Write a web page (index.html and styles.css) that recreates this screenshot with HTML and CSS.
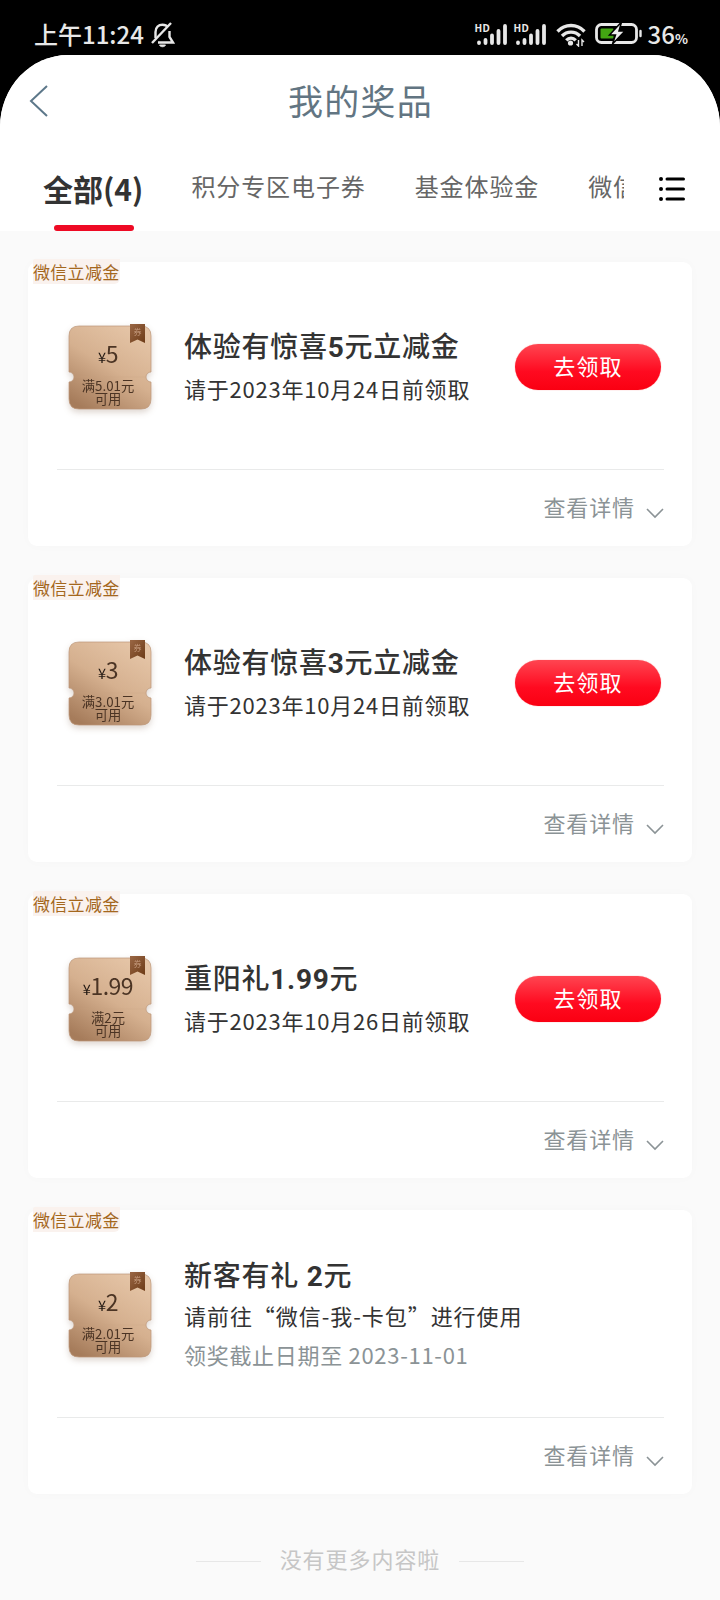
FILE: index.html
```html
<!DOCTYPE html>
<html lang="zh-CN">
<head>
<meta charset="utf-8">
<title>我的奖品</title>
<link rel="stylesheet" href="styles.css">
</head>
<body>
<svg class="defs" width="0" height="0">
  <defs>
    <linearGradient id="gold" x1=".8" y1="0" x2=".2" y2="1">
      <stop offset="0" stop-color="#e6c6a8"/><stop offset=".5" stop-color="#d5b08f"/><stop offset="1" stop-color="#a67c5b"/>
    </linearGradient>
    <linearGradient id="ribbon" x1="0" y1="0" x2="1" y2="1">
      <stop offset="0" stop-color="#9a6745"/><stop offset="1" stop-color="#6d3b17"/>
    </linearGradient>
    <symbol id="coupon" viewBox="0 0 84 86">
      <path d="M11 2H73Q83 2 83 12V48A5 5 0 0 0 83 58V75Q83 85 73 85H11Q1 85 1 75V58A5 5 0 0 0 1 48V12Q1 2 11 2Z" fill="url(#gold)" stroke="#bd9778" stroke-width=".7"/>
      <path d="M7 53H77" stroke="#c8a27f" stroke-width=".6" opacity=".4"/>
      <path d="M62 0H77V19L69.500 15.500L62 19Z" fill="url(#ribbon)"/>
    </symbol>
    <symbol id="down" viewBox="0 0 18 12"><path d="M1 2L9 10L17 2" fill="none" stroke="#8b9396" stroke-width="1.600"/></symbol>
  </defs>
</svg>
<header class="status">
  <span class="time">上午11:24</span>
  <svg class="bell" width="24" height="26" viewBox="0 0 24 26" fill="none" stroke="#e8e8e8" stroke-width="2.400">
    <path d="M4.500 16V10C4.500 5 7.500 2.800 11.500 2.800C14 2.800 16 3.800 17 5.200M18.500 9V15L22 20.500H7"/><path d="M1 21L20 1"/><path d="M8.500 23C9.500 25.300 13.500 25.300 14.500 23Z" fill="#e8e8e8" stroke-width="1"/>
  </svg>
  <div class="indicators">
    <div class="sim"><span>HD</span><svg width="33" height="24" viewBox="0 0 33 24" stroke="#e8e8e8" stroke-width="3.800" stroke-linecap="round"><path d="M4 20V19.500M10.500 20V17M17 20V12.500M23.500 20V8M30 20V3"/></svg></div>
    <div class="sim"><span>HD</span><svg width="33" height="24" viewBox="0 0 33 24" stroke="#e8e8e8" stroke-width="3.800" stroke-linecap="round"><path d="M4 20V19.500M10.500 20V17M17 20V12.500M23.500 20V8M30 20V3"/></svg></div>
    <svg class="wifi" width="30" height="24" viewBox="0 0 30 24" fill="none" stroke="#e8e8e8" stroke-width="3.300">
      <path d="M1.500 8.500C9 .5 21 .5 28.500 8.500M6 13C11 7.800 19 7.800 24 13M10.300 17.300C13 14.300 17 14.300 19.700 17.300"/><circle cx="14.500" cy="20" r="2.600" fill="#e8e8e8" stroke="none"/><path d="M22.500 17V23L20.500 21M26 23V17L28 19" stroke-width="1.400"/>
    </svg>
    <svg class="battery" width="47" height="24" viewBox="0 0 47 24">
      <rect x="1.500" y="2.500" width="40" height="18" rx="5" fill="none" stroke="#e8e8e8" stroke-width="2.800"/>
      <rect x="5.500" y="6.500" width="13" height="10" rx="1" fill="#43a512"/>
      <path d="M26.500 0L14.500 13H20.500L17.500 22L30 9H24Z" fill="#eee" stroke="#000" stroke-width="1.500"/>
      <path d="M45.500 9V14" stroke="#e8e8e8" stroke-width="2.400" stroke-linecap="round"/>
    </svg>
    <span class="percent">36<small>%</small></span>
  </div>
</header>
<main class="app">
  <div class="top">
    <div class="nav">
      <svg class="back" width="20" height="34" viewBox="0 0 20 34"><path d="M18 2L2 17L18 32" fill="none" stroke="#5d788a" stroke-width="2"/></svg>
      <h1>我的奖品</h1>
    </div>
    <div class="tabbar">
      <div class="tabs"><span class="tab active">全部(4)</span><span class="tab">积分专区电子券</span><span class="tab">基金体验金</span><span class="tab">微信立减金</span></div>
      <svg class="menu" width="28" height="26" viewBox="0 0 28 26" stroke="#000" stroke-width="3" stroke-linecap="round"><path d="M9 3H25.500M9 13H25.500M9 23H25.500"/><path d="M3 3H3.010M3 13H3.010M3 23H3.010" stroke-width="4"/></svg>
    </div>
  </div>
  <div class="list">
    <article class="card">
      <span class="tag">微信立减金</span>
      <div class="body">
        <div class="coupon"><svg width="84" height="86"><use href="#coupon"/></svg><span class="mark">券</span><div class="face"><p class="amount"><small>¥</small>5</p><p class="rule">满5.01元<br>可用</p></div></div>
        <div class="info"><h2>体验有惊喜<b>5</b>元立减金</h2><p>请于2023年10月24日前领取</p></div>
        <button class="claim">去领取</button>
      </div>
      <div class="detail"><span>查看详情</span><svg width="18" height="12"><use href="#down"/></svg></div>
    </article>
    <article class="card">
      <span class="tag">微信立减金</span>
      <div class="body">
        <div class="coupon"><svg width="84" height="86"><use href="#coupon"/></svg><span class="mark">券</span><div class="face"><p class="amount"><small>¥</small>3</p><p class="rule">满3.01元<br>可用</p></div></div>
        <div class="info"><h2>体验有惊喜<b>3</b>元立减金</h2><p>请于2023年10月24日前领取</p></div>
        <button class="claim">去领取</button>
      </div>
      <div class="detail"><span>查看详情</span><svg width="18" height="12"><use href="#down"/></svg></div>
    </article>
    <article class="card">
      <span class="tag">微信立减金</span>
      <div class="body">
        <div class="coupon"><svg width="84" height="86"><use href="#coupon"/></svg><span class="mark">券</span><div class="face"><p class="amount"><small>¥</small>1.99</p><p class="rule">满2元<br>可用</p></div></div>
        <div class="info"><h2>重阳礼<b>1.99</b>元</h2><p>请于2023年10月26日前领取</p></div>
        <button class="claim">去领取</button>
      </div>
      <div class="detail"><span>查看详情</span><svg width="18" height="12"><use href="#down"/></svg></div>
    </article>
    <article class="card">
      <span class="tag">微信立减金</span>
      <div class="body">
        <div class="coupon"><svg width="84" height="86"><use href="#coupon"/></svg><span class="mark">券</span><div class="face"><p class="amount"><small>¥</small>2</p><p class="rule">满2.01元<br>可用</p></div></div>
        <div class="info three"><h2>新客有礼 <b>2</b>元</h2><p class="how">请前往“微信-我-卡包”进行使用</p><p class="until">领奖截止日期至 2023-11-01</p></div>
      </div>
      <div class="detail"><span>查看详情</span><svg width="18" height="12"><use href="#down"/></svg></div>
    </article>
  </div>
  <footer class="end">没有更多内容啦</footer>
</main>
</body>
</html>
```
FILE: styles.css
```css
* { box-sizing: border-box; }
body { margin: 0; width: 720px; height: 1600px; overflow: hidden; background: #000; font-family: "Noto Sans CJK SC", sans-serif; color: #333; }
h1, h2, p { margin: 0; }
svg { display: block; flex: none; }
.defs { position: absolute; }

.status { height: 55px; padding: 14px 32px 0 34px; display: flex; align-items: flex-start; color: #e8e8e8; }
.time { font-size: 24px; line-height: 40px; font-weight: 500; white-space: nowrap; }
.bell { margin: 8px 0 0 7px; }
.indicators { display: flex; margin-left: auto; }
.sim { position: relative; width: 33px; margin: 9px 6px 0 0; }
.sim span { position: absolute; left: 0; top: 0; font: 700 10px/11px "Noto Sans", sans-serif; letter-spacing: .3px; }
.wifi { margin: 9px 9px 0 3px; }
.battery { margin: 8px 6px 0 0; }
.percent { font-size: 24px; line-height: 40px; font-weight: 500; white-space: nowrap; }
.percent small { font-size: 13.500px; font-weight: 700; }

.app { height: 1545px; background: #fafafa; border-radius: 68px 68px 0 0 / 72px 72px 0 0; overflow: hidden; }
.top { height: 176px; background: #fff; }
.nav { height: 92px; display: flex; align-items: center; padding-left: 29px; }
.back { width: 20px; }
.nav h1 { flex: 1; margin: -3px 48px 0 0; text-align: center; font-size: 35px; line-height: 50px; font-weight: 400; letter-spacing: 1.200px; color: #627582; }
.tabbar { height: 84px; display: flex; }
.tabs { width: 624px; overflow: hidden; display: flex; padding-left: 43px; white-space: nowrap; }
.tab { flex: none; font-size: 24px; line-height: 36px; padding-top: 21px; margin-right: 49px; letter-spacing: .9px; color: #666; }
.tab.active { position: relative; font-size: 30px; line-height: 44px; padding-top: 19px; margin-right: 48px; font-weight: 700; color: #333; letter-spacing: 0; }
.tab.active::after { content: ""; position: absolute; left: 11px; top: 78px; width: 80px; height: 6px; border-radius: 3px; background: #ee0a24; }
.menu { margin: 29px 0 0 34px; }

.list { padding: 31px 28px 0; display: grid; gap: 32px; }
.card { position: relative; height: 284px; border-radius: 9px; background: #fff; box-shadow: 0 0 12px rgba(0,0,0,.02); padding: 0 28px 0 29px; }
.tag { position: absolute; left: 5px; top: -3px; width: 87px; height: 25px; padding-left: 0; font-size: 17px; line-height: 25px; letter-spacing: .3px; white-space: nowrap; color: #a4671d; background: #faf2ee; border-radius: 2px 0 6px; }
.body { height: 208px; border-bottom: 1px solid #e9eaea; display: flex; align-items: flex-start; }
.coupon { position: relative; flex: none; width: 84px; height: 86px; margin: 62px 0 0 11px; filter: drop-shadow(0 3px 3px rgba(90,50,20,.2)); }
.mark { position: absolute; left: 62px; top: 2px; width: 15px; text-align: center; font-size: 8px; line-height: 12px; color: #c3987b; }
.face { position: absolute; inset: 0; text-align: center; color: #4b3424; }
.amount { padding-top: 12px; margin-left: -4px; font-size: 23px; line-height: 34px; letter-spacing: -.5px; }
.amount small { font-size: 14.500px; color: #211812; }
.rule { margin-top: 5px; margin-left: -4px; font-size: 13.300px; line-height: 13px; }
.info { margin: 65px 0 0 32px; white-space: nowrap; }
.info h2 { font-family: Roboto, "Noto Sans CJK SC", sans-serif; font-size: 28px; line-height: 42px; font-weight: 500; letter-spacing: .75px; }
.info p { margin-top: 2px; font-size: 22px; line-height: 34px; letter-spacing: .78px; }
.info.three { margin-top: 46px; }
.info p.how { margin-top: 0; letter-spacing: .95px; }
.info.three p.until { margin-top: 5px; color: #8b9396; letter-spacing: .7px; }
.claim { margin: 82px 3px 0 auto; width: 146px; height: 46px; padding: 0 0 3px; border: 0; border-radius: 23px; background: linear-gradient(#ff4551, #ff0a20 60%, #fa0012); color: #fff; font: 22px/43px "Noto Sans CJK SC", sans-serif; letter-spacing: 1.200px; box-shadow: 0 0 1px #f66; }
.detail { height: 76px; display: flex; align-items: center; justify-content: flex-end; font-size: 22px; letter-spacing: .9px; color: #8b9396; }
.detail span { padding-bottom: 4px; }
.detail svg { margin: 9px 0 0 11px; }
.end { margin-top: 46px; height: 36px; display: flex; justify-content: center; align-items: center; gap: 19px; font-size: 22px; line-height: 36px; letter-spacing: .95px; color: #c6c6c6; }
.end::before, .end::after { content: ""; width: 65px; height: 1px; margin-top: 7px; background: #e7e7e7; }
```
